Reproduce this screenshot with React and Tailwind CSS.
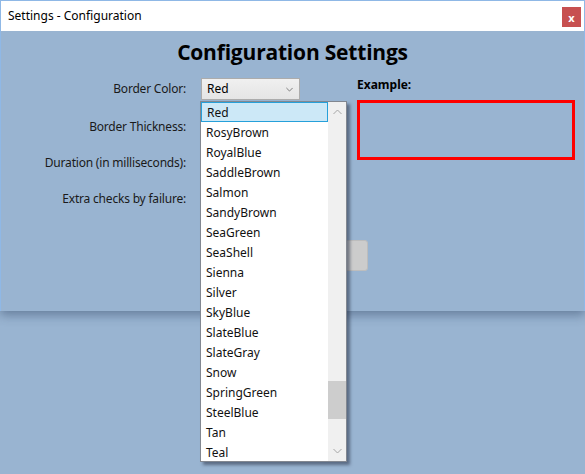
import React from "react";

const items = ["Red","RosyBrown","RoyalBlue","SaddleBrown","Salmon","SandyBrown","SeaGreen","SeaShell","Sienna","Silver","SkyBlue","SlateBlue","SlateGray","Snow","SpringGreen","SteelBlue","Tan","Teal"];

function Chevron({ up, className }) {
  return (
    <svg width="9" height="6" viewBox="0 0 9 6" className={className}>
      <polyline points={up ? "0.5,5 4.5,1 8.5,5" : "0.5,1 4.5,5 8.5,1"} fill="none" stroke="currentColor" strokeWidth="1" />
    </svg>
  );
}

export default function App() {
  return (
    <div className="w-[585px] h-[474px] bg-[#99b4d1] overflow-hidden relative text-black" style={{ fontFamily: '"Noto Sans", "Open Sans", sans-serif' }}>
      <div className="relative shadow-[0_4px_10px_rgba(40,60,90,0.45)] border-t border-x border-[#8fb8e6]">
        <div className="h-[30px] bg-white flex items-center justify-between pl-[7px] pr-[2px]">
          <span className="text-[12px]">Settings - Configuration</span>
          <div className="w-[19px] h-[20px] mt-[2px] mr-[1px] bg-[#c75050] text-white text-[11px] font-bold flex items-center justify-center leading-none">x</div>
        </div>
        <div className="h-[280px] bg-[#99b4d1] relative">
          <h1 className="text-center text-[21px] tracking-[-0.2px] font-bold leading-none pt-[11px]" style={{ fontFamily: '"Open Sans", "Noto Sans", sans-serif' }}>Configuration Settings</h1>
          <div className="flex mt-[15px]">
            <div className="w-[185px] flex flex-col items-end text-[12px] text-[#1a1a1a] tracking-[-0.2px]">
              <div className="h-[22px] flex items-center">Border Color:</div>
              <div className="h-[36px] mt-[9px] flex items-center">Border Thickness:</div>
              <div className="h-[36px] flex items-center">Duration (in milliseconds):</div>
              <div className="h-[36px] flex items-center">Extra checks by failure:</div>
            </div>
            <div className="ml-[15px] w-[157px] flex flex-col">
              <div className="w-[99px] h-[22px] border border-[#acacac] bg-gradient-to-b from-[#f0f0f0] to-[#e5e5e5] flex items-center justify-between pl-[5px] pr-[6px] text-[12px]">
                <span>Red</span>
                <Chevron className="text-[#606060] w-[7px] h-[5px]" />
              </div>
              <div className="mt-[140px] ml-[20px] w-[147px] h-[31px] bg-[#cccccc] border border-[#bdbdbd] rounded-[3px]" />
            </div>
            <div className="-ml-[1px] flex flex-col">
              <div className="text-[12px] font-bold leading-none mt-[1px]">Example:</div>
              <div className="mt-[9px] w-[218px] h-[60px] border-[3px] border-[#ff0000]" />
            </div>
          </div>
        </div>
      </div>

      <div className="absolute left-[200px] top-[101px] w-[147px] h-[361px] bg-white border border-[#828790] shadow-[3px_3px_3px_rgba(40,50,70,0.55)] flex">
        <div className="flex-1 flex flex-col">
          {items.map((it, i) => (
            <div key={it} className={"h-[20px] flex items-center pl-[5px] pt-[2px] text-[12px] text-[#111] " + (i === 0 ? "bg-[#cce8f7] border border-[#26a0da] pl-[4px]" : "")}>{it}</div>
          ))}
        </div>
        <div className="w-[18px] bg-[#f0f0f0] flex flex-col items-center relative">
          <Chevron up className="text-[#a6a6a6] mt-[7px]" />
          <div className="absolute left-0 right-0 top-[279px] h-[38px] bg-[#cdcdcd]" />
          <Chevron className="text-[#a6a6a6] absolute bottom-[7px]" />
        </div>
      </div>
    </div>
  );
}
